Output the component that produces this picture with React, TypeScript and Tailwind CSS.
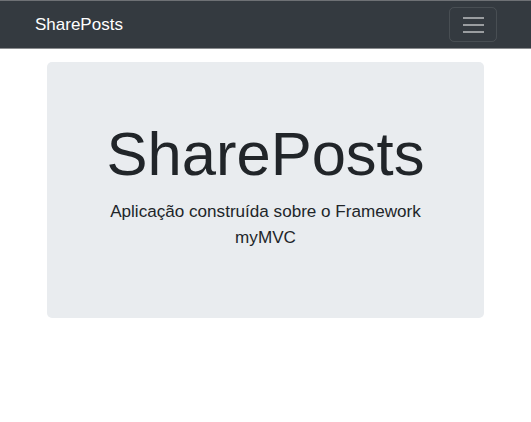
import React from 'react'

export default function App() {
	return (
		<div className="min-h-screen bg-white font-['Liberation_Sans',Arial,sans-serif] text-[#212529]">
			<nav className="flex h-[49px] items-center justify-between border-t border-b border-t-[#6e7175] border-b-[#8a8c8f] bg-[#343a40] pl-[35px] pr-[34px]">
				<a href="#" className="text-[17px] leading-none text-white">
					SharePosts
				</a>
				<button className="flex h-[35px] w-[48px] flex-col items-center justify-center gap-[5px] rounded-[5px] border border-white/10">
					<span className="block h-[2px] w-[21px] bg-white/50"></span>
					<span className="block h-[2px] w-[21px] bg-white/50"></span>
					<span className="block h-[2px] w-[21px] bg-white/50"></span>
				</button>
			</nav>
			<div className="mx-[47px] mt-[13px] h-[256px] rounded-[5px] bg-[#e9ecef] px-8 pt-[55px] text-center">
				<h1 className="mb-[8px] text-[61.5px] leading-[1.2] font-normal">SharePosts</h1>
				<p className="text-[17.1px] leading-[26px]">Aplicação construída sobre o Framework myMVC</p>
			</div>
		</div>
	)
}
